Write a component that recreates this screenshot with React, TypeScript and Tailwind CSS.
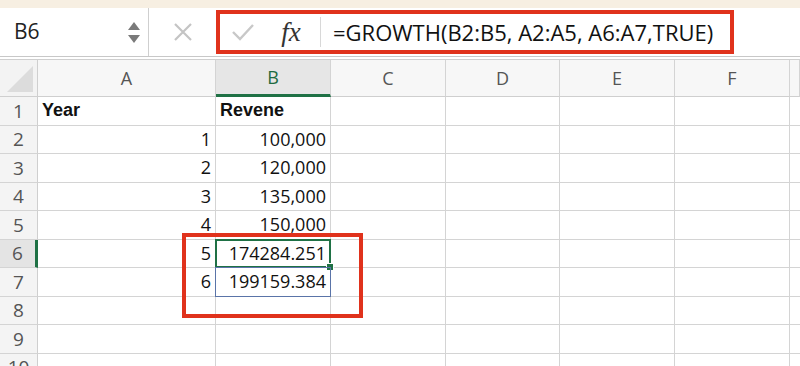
import { Fragment } from "react";

const cols = ["A", "B", "C", "D", "E", "F", ""];

type Row = { n: number; a?: string; b?: string; bold?: boolean };

const rows: Row[] = [
  { n: 1, a: "Year", b: "Revene", bold: true },
  { n: 2, a: "1", b: "100,000" },
  { n: 3, a: "2", b: "120,000" },
  { n: 4, a: "3", b: "135,000" },
  { n: 5, a: "4", b: "150,000" },
  { n: 6, a: "5", b: "174284.251" },
  { n: 7, a: "6", b: "199159.384" },
  { n: 8 },
  { n: 9 },
  { n: 10 },
];

const cellFont = { fontFamily: '"Open Sans", "Liberation Sans", sans-serif' };

const App = () => {
  return (
    <div className="relative w-[800px] h-[366px] overflow-hidden bg-white" style={cellFont}>
      {/* top strip */}
      <div className="h-[8px] bg-[#f7efe2]" />

      {/* formula bar */}
      <div className="flex h-[49px] bg-white border-b border-[#c8c8c8]">
        <div className="flex items-center w-[149px] border-r border-[#cfcfcf] pl-[14px] pr-[8px]">
          <span className="text-[21px] text-[#222] flex-1">B6</span>
          <div className="flex flex-col gap-[5px]">
            <svg width="12" height="8" viewBox="0 0 12 8">
              <path d="M6 0 L12 8 L0 8 Z" fill="#7a7a7a" />
            </svg>
            <svg width="12" height="8" viewBox="0 0 12 8">
              <path d="M0 0 L12 0 L6 8 Z" fill="#7a7a7a" />
            </svg>
          </div>
        </div>
        <div className="flex items-center justify-center w-[67px]">
          <svg width="20" height="20" viewBox="0 0 20 20">
            <path d="M2 2 L18 18 M18 2 L2 18" stroke="#c4c4c4" strokeWidth="2.2" />
          </svg>
        </div>
        <div className="flex items-center w-[518px] my-[2px] border-[4px] border-[#e0321c]">
          <div className="w-[46px] flex justify-center">
            <svg width="24" height="18" viewBox="0 0 24 18">
              <path d="M2 9 L9 16 L22 2" stroke="#c8c8c8" strokeWidth="2.4" fill="none" />
            </svg>
          </div>
          <span
            className="w-[50px] text-center text-[27px] italic text-[#333] leading-none"
            style={{ fontFamily: '"Liberation Serif", serif' }}
          >
            fx
          </span>
          <div className="w-px h-[30px] bg-[#d8d8d8] mx-[4px]" />
          <span className="ml-[8px] text-[22px] text-[#111] whitespace-nowrap">
            =GROWTH(B2:B5, A2:A5, A6:A7,TRUE)
          </span>
        </div>
      </div>
      <div className="h-[3px] border-b border-[#cfcfcf]" />

      {/* sheet grid */}
      <div className="grid grid-cols-[38px_178px_115px_115px_114px_115px_115px_1fr] grid-rows-[37px] auto-rows-[28.5px]">
        <div className="bg-[#f3f3f3] border-r border-b border-[#cfcfcf] relative">
          <svg className="absolute right-[4px] bottom-[4px]" width="26" height="26" viewBox="0 0 26 26">
            <path d="M26 0 L26 26 L0 26 Z" fill="#dcdcdc" />
          </svg>
        </div>
        {cols.map((c, i) => (
          <div
            key={i}
            className={
              "flex items-center justify-center text-[18px] border-r border-[#d4d4d4] " +
              (c === "B"
                ? "bg-[#e6e6e6] text-[#1e6b40] border-b-[3px] border-b-[#1f7145]"
                : "bg-[#f7f7f7] text-[#555] border-b border-b-[#cfcfcf]")
            }
          >
            {c}
          </div>
        ))}

        {rows.map((r) => (
          <Fragment key={r.n}>
            <div
              className={
                "flex items-center justify-center text-[19px] text-[#555] border-b border-[#d4d4d4] " +
                (r.n === 6
                  ? "bg-[#e4e4e4] border-r-[3px] border-r-[#1f7145]"
                  : "bg-[#f4f4f4] border-r border-r-[#cfcfcf]")
              }
            >
              {r.n}
            </div>
            <div
              className={
                "flex items-center px-[4px] text-[18px] text-[#111] border-r border-b border-[#d4d4d4] " +
                (r.bold ? "justify-start font-bold text-[17px]" : "justify-end")
              }
              style={r.bold ? { fontFamily: '"Liberation Sans", Arial, sans-serif' } : undefined}
            >
              {r.a}
            </div>
            <div
              className={
                "relative flex items-center px-[4px] text-[18px] text-[#111] border-r border-b border-[#d4d4d4] " +
                (r.bold ? "justify-start font-bold text-[17px]" : "justify-end")
              }
              style={r.bold ? { fontFamily: '"Liberation Sans", Arial, sans-serif' } : undefined}
            >
              {r.n === 6 && (
                <>
                  <div className="absolute inset-[-1px] border-[2px] border-[#1f7145]" />
                  <div className="absolute right-[-4px] bottom-[-4px] w-[8px] h-[8px] bg-[#1f7145] border border-white" />
                </>
              )}
              {r.n === 7 && <div className="absolute inset-[-1px] border border-[#5a74a8]" />}
              <span className="relative">{r.b}</span>
            </div>
            {[0, 1, 2, 3].map((k) => (
              <div key={k} className="border-r border-b border-[#d4d4d4]" />
            ))}
            <div className="border-b border-[#d4d4d4]" />
          </Fragment>
        ))}
      </div>

      {/* annotation box */}
      <div className="absolute left-[182px] top-[233px] w-[181px] h-[85px] border-[4px] border-[#e0321c] pointer-events-none" />
    </div>
  );
};

export default App;
